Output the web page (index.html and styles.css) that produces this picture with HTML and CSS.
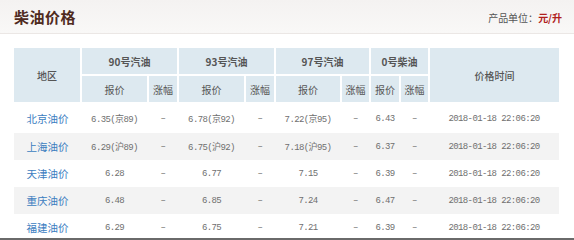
FILE: index.html
```html
<!DOCTYPE html>
<html lang="zh-CN">
<head>
    <meta charset="UTF-8">
    <title>柴油价格</title>
    <link rel="stylesheet" href="styles.css">
</head>
<body>
    <div class="page">
        <header class="bar">
            <h2 class="title">柴油价格</h2>
            <p class="unit">产品单位：<b>元/升</b></p>
        </header>
        <table class="prices">
            <colgroup>
                <col style="width:67px"><col style="width:67px"><col style="width:30px">
                <col style="width:67px"><col style="width:30px"><col style="width:66px">
                <col style="width:29px"><col style="width:30px"><col style="width:29px">
                <col style="width:130px">
            </colgroup>
            <thead>
                <tr class="group">
                    <th rowspan="2" class="plain">地区</th>
                    <th colspan="2">90号汽油</th>
                    <th colspan="2">93号汽油</th>
                    <th colspan="2">97号汽油</th>
                    <th colspan="2">0号柴油</th>
                    <th rowspan="2" class="plain">价格时间</th>
                </tr>
                <tr class="sub">
                    <th>报价</th><th>涨幅</th>
                    <th>报价</th><th>涨幅</th>
                    <th>报价</th><th>涨幅</th>
                    <th>报价</th><th>涨幅</th>
                </tr>
            </thead>
            <tbody>
                <tr>
                    <td><a href="#">北京油价</a></td>
                    <td class="num">6.35(京89)</td><td class="num">–</td>
                    <td class="num">6.78(京92)</td><td class="num">–</td>
                    <td class="num">7.22(京95)</td><td class="num">–</td>
                    <td class="num">6.43</td><td class="num">–</td>
                    <td class="num">2018-01-18 22:06:20</td>
                </tr>
                <tr>
                    <td><a href="#">上海油价</a></td>
                    <td class="num">6.29(沪89)</td><td class="num">–</td>
                    <td class="num">6.75(沪92)</td><td class="num">–</td>
                    <td class="num">7.18(沪95)</td><td class="num">–</td>
                    <td class="num">6.37</td><td class="num">–</td>
                    <td class="num">2018-01-18 22:06:20</td>
                </tr>
                <tr>
                    <td><a href="#">天津油价</a></td>
                    <td class="num">6.28</td><td class="num">–</td>
                    <td class="num">6.77</td><td class="num">–</td>
                    <td class="num">7.15</td><td class="num">–</td>
                    <td class="num">6.39</td><td class="num">–</td>
                    <td class="num">2018-01-18 22:06:20</td>
                </tr>
                <tr>
                    <td><a href="#">重庆油价</a></td>
                    <td class="num">6.48</td><td class="num">–</td>
                    <td class="num">6.85</td><td class="num">–</td>
                    <td class="num">7.24</td><td class="num">–</td>
                    <td class="num">6.47</td><td class="num">–</td>
                    <td class="num">2018-01-18 22:06:20</td>
                </tr>
                <tr>
                    <td><a href="#">福建油价</a></td>
                    <td class="num">6.29</td><td class="num">–</td>
                    <td class="num">6.75</td><td class="num">–</td>
                    <td class="num">7.21</td><td class="num">–</td>
                    <td class="num">6.39</td><td class="num">–</td>
                    <td class="num">2018-01-18 22:06:20</td>
                </tr>
            </tbody>
        </table>
    </div>
</body>
</html>
```

FILE: styles.css
```css
body {
    margin: 0;
    padding: 0;
    background: #fff;
    font-family: "Noto Sans CJK SC", "Noto Sans", sans-serif;
}

.page {
    height: 238px;
    overflow: hidden;
    border-bottom: 2px solid #6a6a6a;
}

.bar {
    height: 33px;
    display: flex;
    align-items: center;
    justify-content: space-between;
    padding: 0 12px 0 14px;
    background: linear-gradient(#f4f2f1, #f9f8f7);
    border-bottom: 1px solid #ebe7e5;
}

.title {
    margin: 0;
    font-size: 15px;
    font-weight: bold;
    color: #4f2b1f;
    letter-spacing: 0.5px;
}

.unit {
    margin: 2px 0 0;
    font-size: 10px;
    color: #555;
}
.unit b {
    color: #b0201c;
}

.prices {
    margin: 14px 0 0 14px;
    width: 545px;
    table-layout: fixed;
    border-collapse: collapse;
}

.prices th {
    background: #dde9f0;
    border: 2px solid #fff;
    color: #555;
    font-size: 10px;
    font-weight: normal;
    padding: 0;
}
.prices tr:first-child th {
    border-top: none;
}
.prices th:first-child {
    border-left: none;
}
.prices tr.group th:last-child {
    border-right: none;
}
.group {
    height: 27px;
}
.group th {
    font-weight: bold;
}
.group th.plain {
    font-weight: 500;
}
.sub {
    height: 28px;
}

.prices td {
    height: 27px;
    padding: 0;
    text-align: center;
    font-size: 10.5px;
}
.prices tbody tr:first-child td {
    height: 29px;
}
.prices tbody tr:nth-child(even) td {
    background: #f3f3f3;
}
.prices a {
    color: #3b7dbf;
    text-decoration: none;
}
.prices td.num {
    font-family: "Liberation Mono", "Noto Sans CJK SC", monospace;
    font-size: 9px;
    letter-spacing: -0.6px;
    color: #6f6f6f;
}
```
